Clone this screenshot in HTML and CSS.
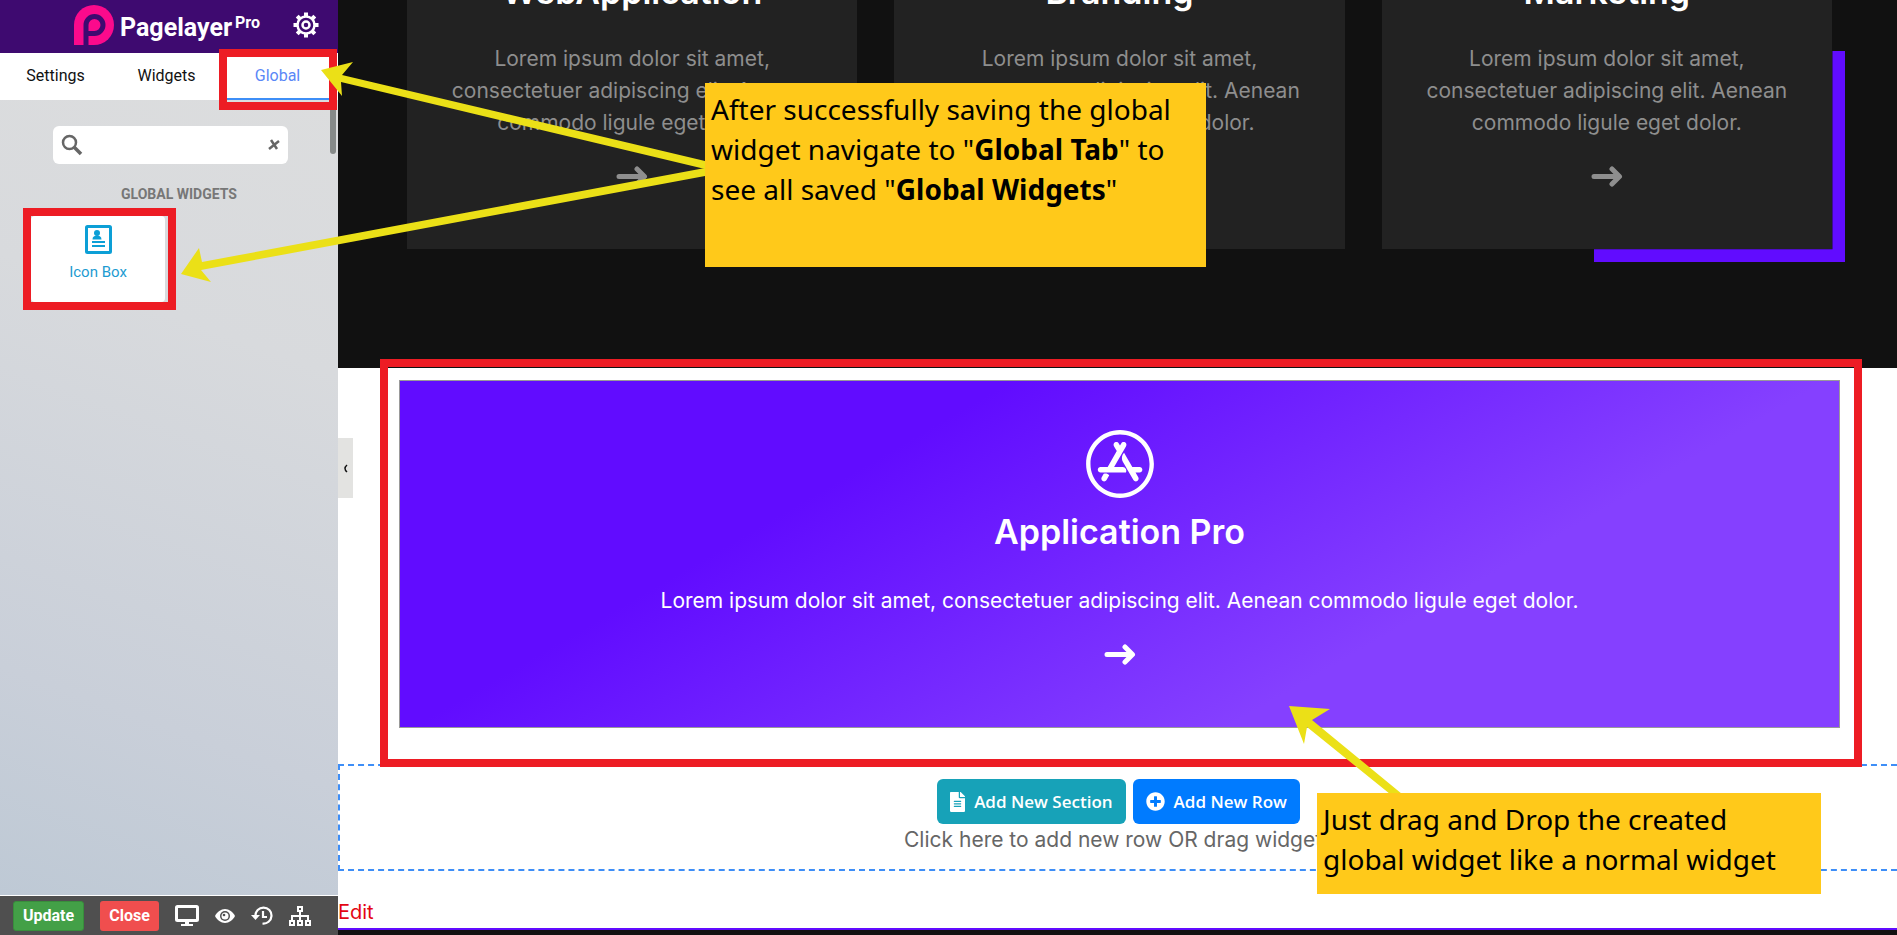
FILE: index.html
```html
<!DOCTYPE html>
<html lang="en">
<head>
  <meta charset="UTF-8" />
  <meta name="viewport" content="width=device-width, initial-scale=1.0" />
  <title>Pagelayer Pro - Global Widgets</title>
  <link rel="stylesheet" href="styles.css">
</head>
<body>
  <aside class="sidebar">
    <header class="brand">
      <svg class="brand-logo" viewBox="0 0 40 40" width="40" height="40">
        <path fill="#fb0a8c" d="M0 40V20a20 20 0 1 1 20 20z"/>
        <path fill="none" stroke="#3e0a70" stroke-width="5" d="M12 40V20a8.500 8.500 0 1 1 8.500 8.500H12"/>
      </svg>
      <span class="brand-name">Pagelayer</span>
      <span class="brand-pro">Pro</span>
      <button class="icon-btn gear" aria-label="Options">
        <svg viewBox="0 0 26 26" width="26" height="26" fill="none" stroke="#fff">
          <circle cx="13" cy="13" r="8.500" stroke-width="2.500"/>
          <circle cx="13" cy="13" r="3.500" stroke-width="2.500"/>
          <path stroke-width="4" d="M13 0.500v4M13 21.500v4M0.500 13h4M21.500 13h4M4.200 4.200l2.800 2.800M19 19l2.800 2.800M4.200 21.800L7 19M19 7l2.800-2.800"/>
        </svg>
      </button>
    </header>

    <nav class="tabs">
      <button class="tab">Settings</button>
      <button class="tab">Widgets</button>
      <button class="tab active">Global</button>
    </nav>

    <div class="panel">
      <div class="scroll-thumb"></div>
      <div class="search">
        <svg viewBox="0 0 22 22" width="22" height="22" fill="none" stroke="#666">
          <circle cx="8.500" cy="8.500" r="6.500" stroke-width="2.500"/>
          <path stroke-width="3.500" d="M13 13l7 7"/>
        </svg>
        <input type="text" id="search" aria-label="Search widgets">
        <button class="icon-btn" aria-label="Clear search">
          <svg viewBox="0 0 12 12" width="12" height="12" stroke="#666" stroke-width="2.500"><path d="M3 1l6 9M11 2L1 10"/></svg>
        </button>
      </div>
      <h2 class="group-title">GLOBAL WIDGETS</h2>
      <div class="widget">
        <svg viewBox="0 0 27 29" width="27" height="29">
          <rect x="1.500" y="1.500" width="24" height="26" rx="1" fill="none" stroke="#0c9fd6" stroke-width="3"/>
          <g fill="#0c9fd6">
            <circle cx="12" cy="8" r="3"/>
            <path d="M7.500 14.500c0-3 2-4 4.500-4s4.500 1 4.500 4zM7 16h13v2H7zM7 20h13v2H7z"/>
          </g>
        </svg>
        <span>Icon Box</span>
      </div>
    </div>

    <footer class="actions">
      <button class="action update">Update</button>
      <button class="action close">Close</button>
      <button class="icon-btn" aria-label="Responsive">
        <svg viewBox="0 0 24 21" width="24" height="21"><rect x="1.500" y="1.500" width="21" height="14" rx="1" fill="none" stroke="#fff" stroke-width="3"/><path fill="#fff" d="M10 16h4v3h4v2H6v-2h4z"/></svg>
      </button>
      <button class="icon-btn" aria-label="Preview">
        <svg viewBox="0 0 20 14" width="20" height="14"><path fill="#fff" d="M0 7C2 3 6 0 10 0s8 3 10 7c-2 4-6 7-10 7S2 11 0 7z"/><circle cx="10" cy="7" r="5" fill="#4f4f4f"/><circle cx="10" cy="7" r="3.500" fill="#fff"/><circle cx="9" cy="6" r="1.300" fill="#4f4f4f"/></svg>
      </button>
      <button class="icon-btn" aria-label="History">
        <svg viewBox="0 0 22 19" width="22" height="19" fill="none" stroke="#fff" stroke-width="2.200"><path d="M4.500 10a8 8 0 1 1 7 7.500M12 5v6h4"/><path fill="#fff" stroke="none" d="M0 9h9l-4.500 5z"/></svg>
      </button>
      <button class="icon-btn" aria-label="Navigator">
        <svg viewBox="0 0 22 20" width="22" height="20" fill="none" stroke="#fff" stroke-width="2"><path d="M9 1h4v4H9zM1 15h4v4H1zM9 15h4v4H9zM17 15h4v4h-4zM11 5v10M3 15v-5h16v5"/></svg>
      </button>
    </footer>
  </aside>

  <main class="preview">
    <section class="services">
      <article class="card">
        <h3>WebApplication</h3>
        <p>Lorem ipsum dolor sit amet, consectetuer adipiscing elit. Aenean commodo ligule eget dolor.</p>
        <svg class="arrow" viewBox="0 0 32 21"><path d="M3 10.500h25M21 3l7.500 7.500L21 18"/></svg>
      </article>
      <article class="card">
        <h3>Branding</h3>
        <p>Lorem ipsum dolor sit amet, consectetuer adipiscing elit. Aenean commodo ligule eget dolor.</p>
        <svg class="arrow" viewBox="0 0 32 21"><path d="M3 10.500h25M21 3l7.500 7.500L21 18"/></svg>
      </article>
      <article class="card shadowed">
        <h3>Marketing</h3>
        <p>Lorem ipsum dolor sit amet, consectetuer adipiscing elit. Aenean commodo ligule eget dolor.</p>
        <svg class="arrow" viewBox="0 0 32 21"><path d="M3 10.500h25M21 3l7.500 7.500L21 18"/></svg>
      </article>
    </section>

    <section class="dropped">
      <div class="icon-box">
        <svg viewBox="0 0 512 512" width="70" height="70" fill="#fff"><path d="M255.9 120.9l9.1-15.7c5.6-9.8 18.1-13.1 27.9-7.5 9.8 5.6 13.1 18.1 7.5 27.9l-87.5 151.5h63.3c20.5 0 32 24.1 23.1 40.8H113.8c-11.3 0-20.4-9.1-20.4-20.4 0-11.3 9.1-20.4 20.4-20.4h52l66.6-115.4-20.8-36.1c-5.6-9.8-2.3-22.2 7.5-27.9 9.8-5.6 22.2-2.3 27.9 7.5l8.900 15.700zm-78.700 218l-19.600 34c-5.600 9.800-18.100 13.100-27.900 7.500-9.800-5.600-13.100-18.100-7.500-27.900l14.600-25.200c16.400-5.100 29.800-1.200 40.400 11.600zm168.900-61.700h53.100c11.300 0 20.400 9.100 20.400 20.400 0 11.300-9.100 20.400-20.400 20.400h-29.500l19.900 34.500c5.600 9.800 2.300 22.200-7.500 27.900-9.800 5.600-22.200 2.300-27.900-7.500-33.500-58.100-58.700-101.600-75.400-130.600-17.100-29.500-4.900-59.100 7.200-69.100 13.400 23 33.400 57.700 60.100 104zM256 8C119 8 8 119 8 256s111 248 248 248 248-111 248-248S393 8 256 8zm216 248c0 118.700-96.100 216-216 216-118.700 0-216-96.100-216-216 0-118.700 96.100-216 216-216 118.700 0 216 96.100 216 216z"/></svg>
        <h3>Application Pro</h3>
        <p>Lorem ipsum dolor sit amet, consectetuer adipiscing elit. Aenean commodo ligule eget dolor.</p>
        <svg class="arrow" viewBox="0 0 32 21"><path d="M3 10.500h25M21 3l7.500 7.500L21 18"/></svg>
      </div>
    </section>

    <section class="add-area">
      <div class="add-buttons">
        <button class="add section">
          <svg viewBox="0 0 384 512" width="15" height="20" fill="#fff"><path d="M224 136V0H24C10.700 0 0 10.700 0 24v464c0 13.300 10.700 24 24 24h336c13.300 0 24-10.700 24-24V160H248c-13.200 0-24-10.800-24-24zm64 236c0 6.600-5.400 12-12 12H108c-6.600 0-12-5.400-12-12v-8c0-6.600 5.400-12 12-12h168c6.600 0 12 5.400 12 12v8zm0-64c0 6.600-5.400 12-12 12H108c-6.600 0-12-5.400-12-12v-8c0-6.600 5.400-12 12-12h168c6.600 0 12 5.400 12 12v8zm0-72v8c0 6.600-5.400 12-12 12H108c-6.600 0-12-5.400-12-12v-8c0-6.600 5.400-12 12-12h168c6.600 0 12 5.400 12 12zm96-114.100v6.100H256V0h6.100c6.400 0 12.500 2.500 17 7l97.900 98c4.500 4.500 7 10.600 7 16.900z"/></svg>
          Add New Section
        </button>
        <button class="add row">
          <svg viewBox="0 0 512 512" width="19" height="19" fill="#fff"><path d="M256 8C119 8 8 119 8 256s111 248 248 248 248-111 248-248S393 8 256 8zm144 276c0 6.600-5.400 12-12 12h-92v92c0 6.600-5.400 12-12 12h-56c-6.600 0-12-5.400-12-12v-92h-92c-6.600 0-12-5.400-12-12v-56c0-6.600 5.400-12 12-12h92v-92c0-6.600 5.400-12 12-12h56c6.600 0 12 5.400 12 12v92h92c6.600 0 12 5.400 12 12v56z"/></svg>
          Add New Row
        </button>
      </div>
      <p>Click here to add new row OR drag widgets</p>
    </section>

    <a class="edit-link" href="#">Edit</a>
    <div class="site-footer"></div>
    <button class="collapse" aria-label="Collapse panel">
      <svg viewBox="0 0 5 9" width="5" height="9" fill="none" stroke="#111" stroke-width="1.500"><path d="M4 1Q0 4.500 4 8"/></svg>
    </button>
  </main>

  <!-- tutorial callouts -->
  <div class="mark mark-tab"></div>
  <div class="mark mark-widget"></div>
  <div class="mark mark-box"></div>
  <svg class="pointers" width="1897" height="935" fill="#ebe017">
    <path d="M321 70l32-8-11 13 363 86v8L341 82l1 14z"/>
    <path d="M181 274l18-26 3 14 503-94v8L201 270l10 12z"/>
    <path d="M1289 706l41 3-18 11 90 74h-12l-83-67-3 17z"/>
  </svg>
  <div class="note note-saved">After successfully saving the global widget navigate to "<b>Global Tab</b>" to see all saved "<b>Global Widgets</b>"</div>
  <div class="note note-drag">Just drag and Drop the created global widget like a normal widget</div>
</body>
</html>
```

FILE: styles.css
```css
* { box-sizing: border-box; }
body { margin: 0; display: flex; height: 100vh; overflow: hidden; position: relative; background: #fff; font-family: Roboto, sans-serif; }
h2, h3, p { margin: 0; }
button { font-family: inherit; border: none; cursor: pointer; }
svg { display: block; flex: none; }
.icon-btn { background: none; padding: 0; }

/* sidebar */
.sidebar { width: 338px; flex: none; display: flex; flex-direction: column; }
.brand { height: 53px; flex: none; display: flex; align-items: center; padding: 0 19px 4px 74px; background: #3e0a70; color: #fff; }
.brand-name { font-size: 25px; font-weight: 700; margin: 5px 3px 0 6px; }
.brand-pro { font-size: 16px; font-weight: 700; margin-bottom: 4px; }
.gear { margin-left: auto; }
.tabs { display: grid; grid-template-columns: repeat(3, 1fr); height: 47px; flex: none; padding-right: 5px; background: #fff; }
.tab { background: none; font-size: 16px; padding: 0; color: #111; border-bottom: 2px solid transparent; }
.tab.active { color: #5a87f7; border-bottom-color: #3e8ef7; }
.panel { flex: 1; position: relative; padding: 26px 31px 0; background: linear-gradient(20deg, #bec9d5, #c9cfd9 25%, #d8dadd 70%, #dcddde); border-bottom: 1px solid #fff; }
.scroll-thumb { position: absolute; top: 0; right: 2px; width: 6px; height: 54px; border-radius: 3px; background: #868a89; }
.search { display: flex; align-items: center; height: 38px; margin: 0 19px 0 22px; padding: 0 8px; background: #fff; border-radius: 6px; }
.search input { flex: 1; min-width: 0; border: none; outline: none; background: none; font-size: 16px; }
.group-title { font-size: 14px; font-weight: 700; line-height: 20px; margin: 20px 0 12px; padding-left: 20px; text-align: center; color: #777; }
.widget { width: 134px; height: 86px; display: flex; flex-direction: column; align-items: center; gap: 8px; padding-top: 9px; background: #fff; border-radius: 4px; color: #1d9bd1; font-size: 15px; line-height: 20px; }
.actions { height: 39px; flex: none; display: flex; align-items: center; gap: 16px; padding: 0 13px; background: #4f4f4f; }
.action { height: 30px; padding: 0 9px; border-radius: 3px; color: #fff; font-size: 16px; font-weight: 700; }
.update { background: #43a047; border: 1px solid #388e3c; }
.close { background: #f04e4e; }

/* page preview */
.preview { flex: 1; min-width: 0; position: relative; overflow: hidden; font-family: Inter, sans-serif; font-size: 21px; line-height: 32px; color: #666; }
.services { display: grid; grid-template-columns: repeat(3, 1fr); gap: 37px; margin-top: -80px; padding: 0 65px 119px 69px; background: #111; }
.card { display: flex; flex-direction: column; align-items: center; padding: 52px 36px 62px; background: #222; color: #8e8e8e; text-align: center; }
.card h3, .icon-box h3 { font-size: 34px; line-height: 40px; font-weight: 600; color: #fff; }
.card p { margin: 31px 0 27px; }
.arrow { width: 32px; height: 21px; fill: none; stroke: currentColor; stroke-width: 5; stroke-linecap: round; stroke-linejoin: round; }
.shadowed { position: relative; }
.shadowed::before { content: ""; position: absolute; z-index: 0; right: -13px; bottom: -13px; width: 251px; height: 211px; background: #610cff; clip-path: polygon(95% 0, 100% 0, 100% 100%, 0 100%, 0 94%, 95% 94%); }
.dropped { padding: 12px 57px 36px 61px; }
.icon-box { display: flex; flex-direction: column; align-items: center; padding: 48px 20px 62px; border: 1px solid #999; background: linear-gradient(150deg, #610cff 30%, #8540ff 70%); color: #fff; text-align: center; }
.icon-box h3 { margin-top: 13px; }
.icon-box p { margin: 33px 0 27px; }
.add-area { display: flex; flex-direction: column; align-items: center; height: 107px; padding: 13px 0 0; border: 2px dashed #3e8ef7; border-right: none; }
.add-buttons { display: flex; gap: 7px; }
.add { display: flex; align-items: center; gap: 9px; height: 45px; padding: 0 13px; border-radius: 6px; color: #fff; font-family: "Open Sans", sans-serif; font-size: 17px; font-weight: 600; }
.section { background: #17a2b8; }
.row { background: #007bff; }
.edit-link { display: block; margin: 25px 0 0; color: #e30613; font-size: 20px; text-decoration: none; }
.site-footer { height: 40px; border-top: 2px solid #610cff; background: #111; }
.collapse { position: absolute; left: 0; top: 438px; width: 15px; height: 60px; padding: 0 5px; background: #e3e3e1; }

/* callouts drawn over the editor */
.mark { position: absolute; border: 8px solid #ed1c24; }
.mark-tab { left: 219px; top: 49px; width: 118px; height: 61px; }
.mark-widget { left: 23px; top: 208px; width: 153px; height: 102px; }
.mark-box { left: 380px; top: 359px; right: 35px; height: 408px; }
.pointers { position: absolute; left: 0; top: 0; }
.note { position: absolute; padding: 6px; background: #ffc91a; color: #000; font-family: "Noto Sans", sans-serif; font-size: 28px; line-height: 40px; }
.note-saved { left: 705px; top: 83px; width: 501px; height: 184px; }
.note-drag { left: 1317px; top: 793px; width: 504px; height: 101px; }
```
